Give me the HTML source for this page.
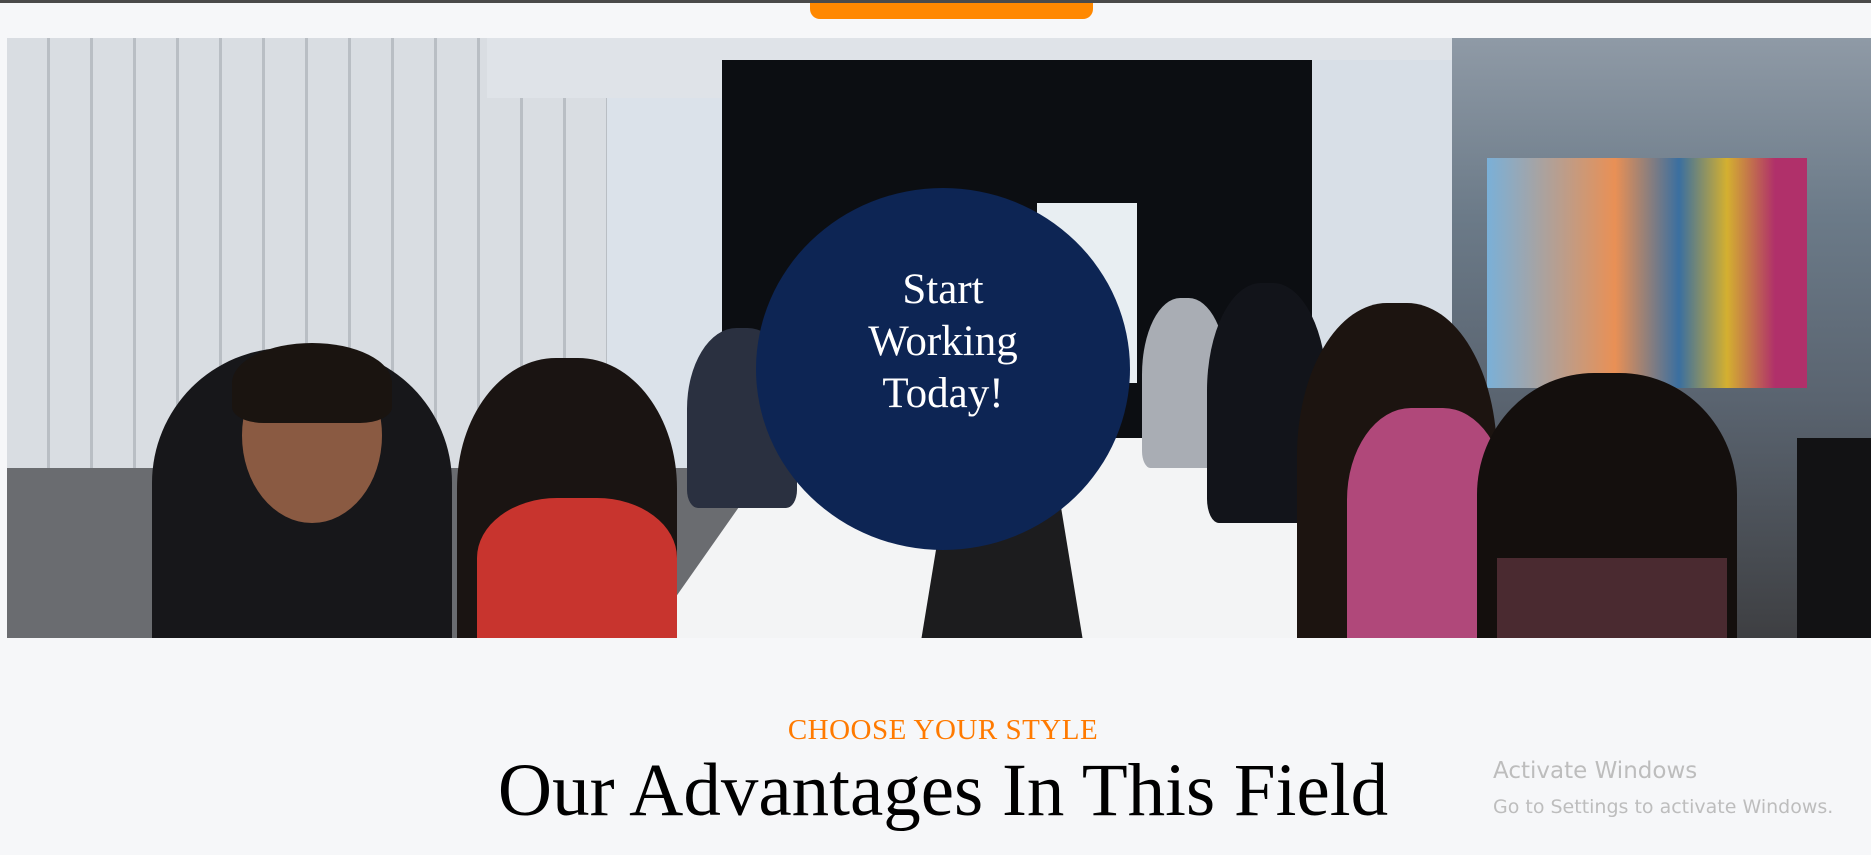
<!DOCTYPE html>
<html><head><meta charset="utf-8"><style>
*{margin:0;padding:0;box-sizing:border-box}
body{width:1871px;height:855px;background:#f6f7f9;position:relative;overflow:hidden;font-family:"Liberation Serif",serif}
.abs{position:absolute}
</style></head><body>
<div class="abs" style="left:0;top:0;width:1871px;height:3px;background:#4a4a4a"></div>
<div class="abs" style="left:810px;top:3px;width:283px;height:16px;background:#ff8800;border-radius:0 0 10px 10px"></div>
<div class="abs" style="left:7px;top:38px;width:1864px;height:600px;overflow:hidden;background:#8a9098">
  <div class="abs" style="left:0;top:0;width:620px;height:600px;background:repeating-linear-gradient(90deg,#d9dde2 0 40px,#b9bec4 40px 43px)"></div>
  <div class="abs" style="left:480px;top:0;width:1000px;height:60px;background:#dfe3e8"></div>
  <div class="abs" style="left:600px;top:60px;width:120px;height:380px;background:#dbe2ea"></div>
  <div class="abs" style="left:715px;top:22px;width:595px;height:380px;background:#0c0e12"></div>
  <div class="abs" style="left:1030px;top:165px;width:100px;height:180px;background:#e8eef2"></div>
  <div class="abs" style="left:1305px;top:22px;width:140px;height:380px;background:#d8dfe7"></div>
  <div class="abs" style="left:1445px;top:0;width:420px;height:600px;background:linear-gradient(180deg,#8f9aa6 0,#6b7a88 30%,#5a6470 60%,#3e3f42 100%)"></div>
  <div class="abs" style="left:1480px;top:120px;width:320px;height:230px;background:linear-gradient(90deg,#7ab0d8,#e99055 40%,#3a6fa0 60%,#d4b030 75%,#b0306a 90%)"></div>
  <div class="abs" style="left:0;top:430px;width:1445px;height:170px;background:#6a6c70"></div>
  <div class="abs" style="left:640px;top:400px;width:780px;height:200px;background:#f3f4f5;clip-path:polygon(18% 0,82% 0,100% 100%,0 100%)"></div>
  <div class="abs" style="left:880px;top:460px;width:230px;height:140px;background:#1c1c1e;clip-path:polygon(25% 0,75% 0,85% 100%,15% 100%)"></div>
  <div class="abs" style="left:145px;top:310px;width:300px;height:300px;background:#17171a;border-radius:45% 45% 0 0"></div>
  <div class="abs" style="left:235px;top:310px;width:140px;height:175px;background:#8a5a42;border-radius:50%"></div>
  <div class="abs" style="left:225px;top:305px;width:160px;height:80px;background:#1a1410;border-radius:50% 50% 20% 20%"></div>
  <div class="abs" style="left:450px;top:320px;width:220px;height:290px;background:#1a1412;border-radius:45% 45% 0 0"></div>
  <div class="abs" style="left:470px;top:460px;width:200px;height:150px;background:#c8342e;border-radius:40% 40% 0 0"></div>
  <div class="abs" style="left:680px;top:290px;width:110px;height:180px;background:#2a3040;border-radius:45% 45% 10% 10%"></div>
  <div class="abs" style="left:1135px;top:260px;width:85px;height:170px;background:#a9adb4;border-radius:45% 45% 10% 10%"></div>
  <div class="abs" style="left:1200px;top:245px;width:120px;height:240px;background:#12141a;border-radius:45% 45% 10% 10%"></div>
  <div class="abs" style="left:1290px;top:265px;width:200px;height:340px;background:#1c1410;border-radius:45% 45% 0 0"></div>
  <div class="abs" style="left:1340px;top:370px;width:160px;height:230px;background:#b0487a;border-radius:40% 40% 0 0"></div>
  <div class="abs" style="left:1470px;top:335px;width:260px;height:270px;background:#140f0d;border-radius:45% 45% 0 0"></div>
  <div class="abs" style="left:1490px;top:520px;width:230px;height:80px;background:#4a2a30"></div>
  <div class="abs" style="left:1790px;top:400px;width:80px;height:200px;background:#121214"></div>
  <div class="abs" style="left:749px;top:150px;width:374px;height:362px;border-radius:50%;background:#0d2554;color:#fff;font-size:43px;line-height:52px;text-align:center;display:flex;align-items:center;justify-content:center"><div style="margin-top:-54px">Start<br>Working<br>Today!</div></div>
</div>
<div class="abs" style="left:0;top:714px;width:1871px;text-align:center;color:#ff7a00;font-size:29px;letter-spacing:0.5px"><span style="margin-left:15px">CHOOSE YOUR STYLE</span></div>
<div class="abs" style="left:0;top:747px;width:1871px;text-align:center;color:#000;font-size:75px;line-height:88px"><span style="margin-left:15px">Our Advantages In This Field</span></div>
<div class="abs" style="left:1493px;top:758px;color:#bdbdbd;font-family:'DejaVu Sans','Liberation Sans',sans-serif;font-size:23px">Activate Windows</div>
<div class="abs" style="left:1493px;top:796px;color:#bdbdbd;font-family:'DejaVu Sans','Liberation Sans',sans-serif;font-size:19px">Go to Settings to activate Windows.</div>
</body></html>
